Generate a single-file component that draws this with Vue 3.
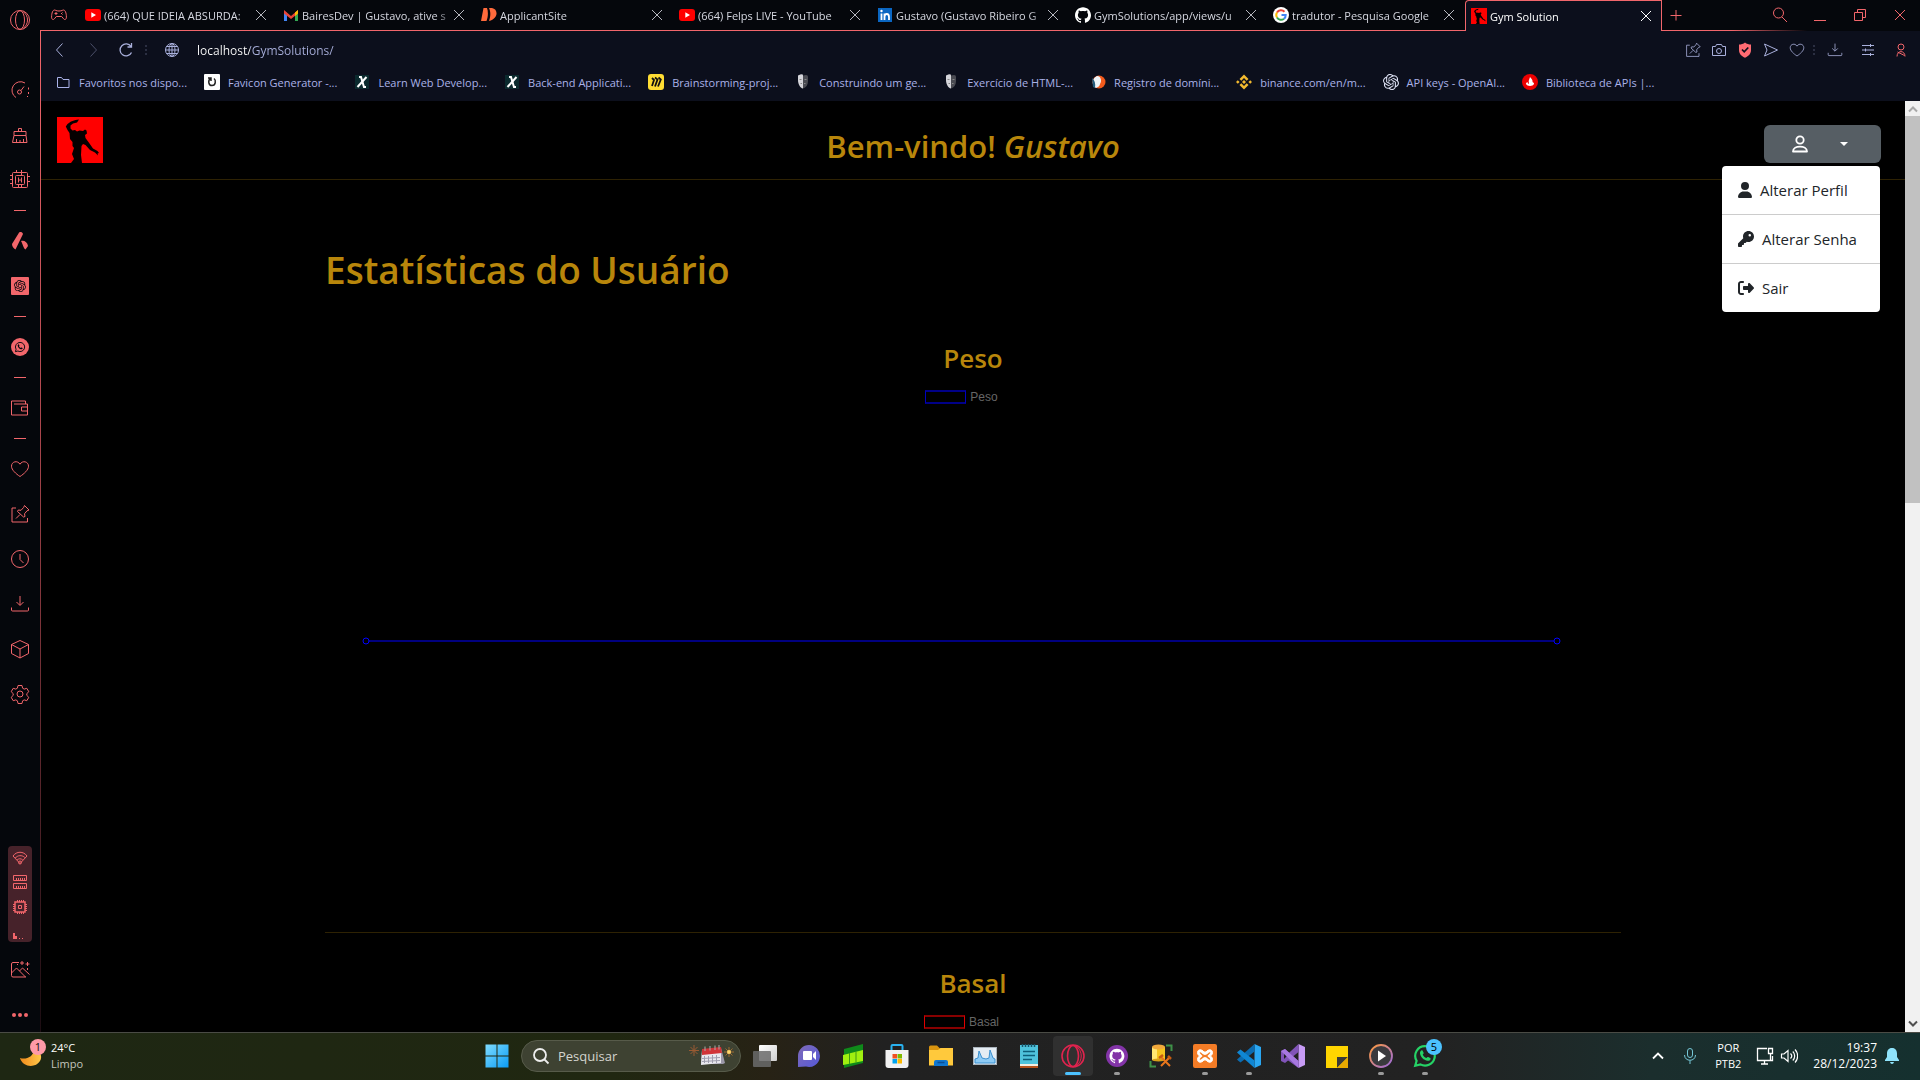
<script setup>
import { h, ref } from 'vue'

const openaiPath = 'M22.2819 9.8211a5.9847 5.9847 0 0 0-.5157-4.9108 6.0462 6.0462 0 0 0-6.5098-2.9A6.0651 6.0651 0 0 0 4.9807 4.1818a5.9847 5.9847 0 0 0-3.9977 2.9 6.0462 6.0462 0 0 0 .7427 7.0966 5.98 5.98 0 0 0 .511 4.9107 6.051 6.051 0 0 0 6.5146 2.9001A5.9847 5.9847 0 0 0 13.2599 24a6.0557 6.0557 0 0 0 5.7718-4.2058 5.9894 5.9894 0 0 0 3.9977-2.9001 6.0557 6.0557 0 0 0-.7475-7.0729zm-9.022 12.6081a4.4755 4.4755 0 0 1-2.8764-1.0408l.1419-.0804 4.7783-2.7582a.7948.7948 0 0 0 .3927-.6813v-6.7369l2.02 1.1686a.071.071 0 0 1 .038.052v5.5826a4.504 4.504 0 0 1-4.4945 4.4944zm-9.6607-4.1254a4.4708 4.4708 0 0 1-.5346-3.0137l.142.0852 4.783 2.7582a.7712.7712 0 0 0 .7806 0l5.8428-3.3685v2.3324a.0804.0804 0 0 1-.0332.0615L9.74 19.9502a4.4992 4.4992 0 0 1-6.1408-1.6464zM2.3408 7.8956a4.485 4.485 0 0 1 2.3655-1.9728V11.6a.7664.7664 0 0 0 .3879.6765l5.8144 3.3543-2.0201 1.1685a.0757.0757 0 0 1-.071 0l-4.8303-2.7865A4.504 4.504 0 0 1 2.3408 7.872zm16.5963 3.8558L13.1038 8.364 15.1192 7.2a.0757.0757 0 0 1 .071 0l4.8303 2.7913a4.4944 4.4944 0 0 1-.6765 8.1042v-5.6772a.79.79 0 0 0-.407-.667zm2.0107-3.0231l-.142-.0852-4.7735-2.7818a.7759.7759 0 0 0-.7854 0L9.409 9.2297V6.8974a.0662.0662 0 0 1 .0284-.0615l4.8303-2.7866a4.4992 4.4992 0 0 1 6.6802 4.66zM8.3065 12.863l-2.02-1.1638a.0804.0804 0 0 1-.038-.0567V6.0742a4.4992 4.4992 0 0 1 7.3757-3.4537l-.142.0805L8.704 5.459a.7948.7948 0 0 0-.3927.6813zm1.0976-2.3654l2.602-1.4998 2.6069 1.4998v2.9994l-2.5974 1.4997-2.6067-1.4997Z'
const githubPath = 'M12 .297c-6.63 0-12 5.373-12 12 0 5.303 3.438 9.8 8.205 11.385.6.113.82-.258.82-.577 0-.285-.01-1.04-.015-2.04-3.338.724-4.042-1.61-4.042-1.61C4.422 18.07 3.633 17.7 3.633 17.7c-1.087-.744.084-.729.084-.729 1.205.084 1.838 1.236 1.838 1.236 1.07 1.835 2.809 1.305 3.495.998.108-.776.417-1.305.76-1.605-2.665-.3-5.466-1.332-5.466-5.93 0-1.31.465-2.38 1.235-3.22-.135-.303-.54-1.523.105-3.176 0 0 1.005-.322 3.3 1.23.96-.267 1.98-.399 3-.405 1.02.006 2.04.138 3 .405 2.28-1.552 3.285-1.23 3.285-1.23.645 1.653.24 2.873.12 3.176.765.84 1.23 1.91 1.23 3.22 0 4.61-2.805 5.625-5.475 5.92.42.36.81 1.096.81 2.22 0 1.606-.015 2.896-.015 3.286 0 .315.21.69.825.57C20.565 22.092 24 17.592 24 12.297c0-6.627-5.373-12-12-12'
const phonePath = 'M8.3 6.6c.4-.4 1-.4 1.3.1l1 2c.2.4.1.7-.2 1l-.7.8c.8 1.7 2 2.9 3.7 3.6l.9-.9c.3-.3.6-.3.9-.2l2 1c.5.3.5.7.3 1.2-.5 1.2-1.7 1.8-2.9 1.6-4-.6-7-3.600-7.600-7.500-.1-1.100.4-2.100 1.300-2.700z'
const bubblePath = 'M12 2.200a9.700 9.700 0 0 0-8.400 14.600L2.200 21.800l5.200-1.400A9.700 9.700 0 1 0 12 2.200z'
const xmark = '<path d="M1 1l10 10M11 1L1 11"/>'

// name: [viewBox, markup]; strokes follow the text colour unless a shape sets its own
const icons = {
  close: ['0 0 12 12', xmark],
  plus: ['0 0 12 12', '<path d="M6 1v10.500M.5 6.500h11"/>'],
  search: ['0 0 16 16', '<circle cx="6.500" cy="6" r="5"/><path d="M10 10l5 5"/>'],
  minimise: ['0 0 12 12', '<path d="M0 11.500h12"/>'],
  restore: ['0 0 12 12', '<path d="M.5 3.500h8v8h-8zM3.500 3.500v-3h8v8h-3"/>'],
  pad: ['0 0 16 12', '<path d="M3.500 1C1.800 1 .6 4 .6 8c0 2.500 1.600 3.300 2.800 1.800L5.300 7.500h5.400l1.900 2.300c1.200 1.500 2.800.7 2.800-1.800 0-4-1.200-7-2.900-7-1 0-1.500 1-4.500 1S4.500 1 3.500 1z"/><path d="M5 3v3M3.500 4.500h3M10 4.500h1M11.500 3.500h.5M11.500 5.500h.5"/>'],
  opera: ['0 0 22 22', '<circle cx="11" cy="11" r="9.500"/><ellipse cx="11" cy="11" rx="4.500" ry="9.300"/><path d="M14 2.500c6 4 6 13 0 17"/>'],
  gauge: ['0 0 20 20', '<path d="M6 17.500A8.500 8.500 0 1 1 15 3M18.500 7.500v2M18.500 12v2M17.500 16v1"/><circle cx="9.500" cy="12" r="2"/><path d="M11 10.500l3-4"/>'],
  broom: ['0 0 20 20', '<path d="M8.500 6.500V3.500h3v3M4 6.500h12v4H4zM4 10.500l-1.500 7h14.500l-1-7M6.500 17v-3M10 17v-2M13.500 17v-3"/>'],
  chipbig: ['0 0 20 20', '<rect x="2.500" y="2.500" width="15" height="15" rx="1"/><rect x="5.500" y="5.500" width="9" height="9" rx="1"/><path d="M8.500 7.500v5M11.500 7.500v5M8.500 10h3M6.500 0v2M11.500 0v5M0 5.500h2M0 9.500h2M0 13.500h2M18 6.500h2M18 11.500h2M8.500 15v3M11.500 15v3"/>'],
  arc: ['0 0 20 20', '<g fill="currentColor" stroke="none"><path d="M8.500 2.500C9.500.5 12 .5 13 3L5.500 18.500C3.500 17.500 2 15.500 2 13z"/><path d="M11 10c3-1 6.500 1 7 5l-2.500 3.500c-2-1-2.500-5-4.500-8.500z"/></g>'],
  gptbox: ['0 0 18 18', `<g stroke="none"><rect width="18" height="18" rx="1" fill="currentColor"/><path transform="translate(3 3) scale(.5)" fill="#05070c" d="${openaiPath}"/></g>`],
  wabox: ['0 0 24 24', `<circle cx="12" cy="12" r="12" fill="currentColor" stroke="none"/><g transform="translate(4.500 4.500) scale(.63)" stroke="#05070c" stroke-width="2"><path d="${bubblePath}"/><path d="${phonePath}" fill="#05070c" stroke="none"/></g>`],
  wallet: ['0 0 20 20', '<path d="M15.500 6V3H1.500v14h16V6H4M17.500 9h-6v4h6"/>'],
  heart: ['0 0 20 20', '<path d="M10 17.500C6 14.800 1.500 11 1.500 7.200 1.500 2.500 7.500 1 10 5.200 12.500 1 18.500 2.500 18.500 7.200 18.500 11 14 14.800 10 17.500z"/>'],
  pin: ['0 0 20 20', '<path d="M6 4H2v14h15.500v-4M14.500 1.500l4.500 4.500-2 .8-2.500 3 .5 2.700-1.500.5-6-5.500.8-1.500 2.700.3 2.600-2.800zM10 10.500L6 14.500"/>'],
  clock: ['0 0 20 20', '<circle cx="10" cy="10" r="8.500"/><path d="M10 5v5.500l3.500 3.500"/>'],
  download: ['0 0 20 20', '<path d="M10 2v9M6.500 8l3.500 3.500L13.500 8M1.500 13.500v2.500q0 1 1 1h15q1 0 1-1v-2.500"/>'],
  cube: ['0 0 20 20', '<path d="M10 1.500l8.500 4v9L10 19l-8.500-4.500v-9zM1.500 5.500L10 10l8.500-4.500M10 10v9"/>'],
  gear: ['0 0 20 20', '<circle cx="10" cy="10" r="3"/><path d="M8 1.500h4l.6 2.700 1.600.9 2.600-.8 2 3.400-2 1.900v1.800l2 1.900-2 3.400-2.600-.8-1.600.9-.6 2.700H8l-.6-2.700-1.600-.9-2.600.8-2-3.400 2-1.900V9.600l-2-1.900 2-3.400 2.600.8 1.600-.9z"/>'],
  wifi: ['0 0 16 14', '<path d="M1 5C4.500 0 11.500 0 15 5L8 12.500zM3.300 7C5.500 4.200 10 3.800 12.800 6.500M5 9.200c1.500-1.800 4-1.900 5.700-.3"/><circle cx="8" cy="11.500" r="1.500"/>'],
  ram: ['0 0 16 16', '<path d="M1.500 1.500h13v5h-13zM1.500 9.500h13v5h-13zM4.500 4v2M6.500 4v2M8.500 4v2M10.500 4v2M12.500 4v2M4.500 12v2M6.500 12v2M8.500 12v2M10.500 12v2M12.500 12v2"/>'],
  cpu: ['0 0 16 16', '<path d="M3 3h10v10H3z" stroke-width="1.500"/><path d="M6.500 6.500h3v3h-3zM5.500 1v2M7.500 1v2M9.500 1v2M11.500 1v2M5.500 13v2M7.500 13v2M9.500 13v2M11.500 13v2M1 5.500h2M1 7.500h2M1 9.500h2M1 11.500h2M13 5.500h2M13 7.500h2M13 9.500h2M13 11.500h2"/>'],
  usage: ['0 0 16 8', '<path d="M1 7V1h2v3h2v3zM7 6h1v1H7zM10 6h1v1h-1z" fill="currentColor" stroke="none"/>'],
  image: ['0 0 20 20', '<path d="M9 2.500H3q-1.500 0-1.500 1.500v11.500q0 1.500 1.500 1.500h13M1.500 13l5-5 9 9M9.500 11l3-3 7 6.500M17.500 8v2M12 1v4M10 3h4M17.500 2v4M15.500 4h4M7 4.500h1"/>'],
  dots: ['0 0 20 6', '<g fill="currentColor" stroke="none"><circle cx="4" cy="3" r="2"/><circle cx="10" cy="3" r="2"/><circle cx="16" cy="3" r="2"/></g>'],
  back: ['0 0 16 16', '<path d="M10.500 1.500L4.500 8l6 6.500"/>'],
  forward: ['0 0 16 16', '<path d="M5.500 1.500l6 6.500-6 6.500"/>'],
  reload: ['0 0 16 16', '<path d="M13.500 10.500A6 6 0 1 1 13 4.500M13.500 1v4h-4" stroke-width="1.300"/>'],
  sep: ['0 0 4 16', '<path d="M2 3v2M2 7v2M2 11v2"/>'],
  globe: ['0 0 16 16', '<circle cx="8" cy="8" r="6.500"/><ellipse cx="8" cy="8" rx="3" ry="6.500"/><path d="M1.500 8h13M2.500 4.500h11M2.500 11.500h11M8 1.500v13"/>'],
  camera: ['0 0 16 16', '<path d="M1.500 4.500h3l1-2h5l1 2h3v9h-13z"/><circle cx="8" cy="9" r="2.500"/>'],
  shield: ['0 0 16 16', '<path d="M8 .5C9.500 2 12 2.500 14 2.500V8c0 4-3 6.500-6 7.700C5 14.500 2 12 2 8V2.500C4 2.500 6.500 2 8 .5z" fill="#ff6b72" stroke="none"/><path d="M5 7.500l2.200 2.300L11.300 5.500" stroke="#0c0f1c" stroke-width="1.700"/>'],
  send: ['0 0 16 16', '<path d="M1.500 2l13 6-13 6 2.500-6z"/>'],
  sliders: ['0 0 16 16', '<path d="M2 3.500h12M2 8h12M2 12.500h12M10.500 2v3M5.500 6.500v3M10.500 11v3"/>'],
  person: ['0 0 16 16', '<circle cx="8" cy="5" r="3"/><path d="M4 14.500c0-6.500 8-6.500 8 0M4.500 10l7 3.500"/>'],
  youtube: ['0 0 16 16', '<g stroke="none"><rect y="2" width="16" height="12" rx="3" fill="#f00"/><path d="M6.300 5.200v5.600L11 8z" fill="#fff"/></g>'],
  gmail: ['0 0 16 16', '<g stroke="none"><path d="M1 4v10h3V6z" fill="#4285f4"/><path d="M12 6v8h3V4z" fill="#34a853"/><path d="M1 3l7 6 7-6v3.500L8 12 1 6.500z" fill="#ea4335"/><path d="M12 5.500l3-2.500v3.500L12 9z" fill="#fbbc04"/></g>'],
  applicant: ['0 0 16 16', '<path d="M2.500 1H6c1.500 4 1 9-.5 13H0zM8 1h3c6.500 1 6.500 11-3 13 1.500-4 2-9 0-13z" fill="#ff6a3c" stroke="none"/>'],
  linkedin: ['0 0 16 16', '<rect x="1" y="1" width="14" height="14" fill="#0a66c2" stroke="none"/><path d="M4.500 6.500V13M7.500 13V6.500M7.500 10c0-4 4.500-4 4.500 0v3" stroke="#fff" stroke-width="1.800"/><circle cx="4.500" cy="4" r="1.200" fill="#fff" stroke="none"/>'],
  github: ['0 0 24 24', `<path d="${githubPath}" fill="#fff" stroke="none"/>`],
  google: ['0 0 16 16', '<circle cx="8" cy="8" r="8" fill="#fff" stroke="none"/><g stroke-width="2"><path d="M11.500 4.700A4.700 4.700 0 0 0 4 5.500" stroke="#ea4335"/><path d="M4 5.500a4.700 4.700 0 0 0 0 5" stroke="#fbbc05"/><path d="M4 10.500a4.700 4.700 0 0 0 7 1.200" stroke="#34a853"/><path d="M11 11.700A4.500 4.500 0 0 0 12.700 8H8.500" stroke="#4285f4"/></g>'],
  gym: ['0 0 46 46', '<g stroke="none"><rect width="46" height="46" fill="#f00"/><path d="M22 2.500L18.500 3 14 4.500 10.500 7 8.800 9.500 10.500 13 12.500 16 13 22 15.500 25 15.500 29 17 31 15 37 17 42 14 46H25L24 38 24.500 29 26 27 28.500 28 33 33 38 35.500 41 38.500 40.500 36.500 42 36 40.500 34 36 31.500 32.500 26.500 28.500 21 28 18 30 16.500 29.500 13.500 28 12.500 26 14 22.500 13.500 20 14.500 18 13 15.500 13.500 13.500 11.500 13.500 8.500 16 6.500 20 5.500z" fill="#050000"/></g>'],
  folder: ['0 0 16 16', '<path d="M2.500 3.500h4l1.500 2h6v8h-11q-.5 0-.5-.5z"/>'],
  favicon: ['0 0 16 16', '<rect width="16" height="16" rx="1" fill="#fff" stroke="none"/><path d="M4 4h3v3M6.500 4.500C4 6 4 11.500 8 11.500S12 6 10 4.500" stroke="#222" stroke-width="1.500"/>'],
  xbox: ['0 0 16 16', '<rect x="1" y="1" width="14" height="14" fill="#0b2a2e" stroke="none"/><path d="M5 3h2l3 10h2" stroke="#fff" stroke-width="2"/><path d="M12.500 3L3.500 13" stroke="#fff" stroke-width="2"/>'],
  miro: ['0 0 16 16', '<rect width="16" height="16" rx="3" fill="#ffdd33" stroke="none"/><path d="M4 4l2 2-2 6M7 3.500l2.500 2L7 12.500M10.500 3.500l2.300 2-2.800 7" stroke="#111" stroke-width="1.800"/>'],
  mask: ['0 0 16 16', '<path d="M3 1.500q5-2.500 5 0v13C5 14 3 10 3 6z" fill="#d5d5da" stroke="none"/><path d="M8 1.500q5-1.500 5 1V7c0 4-2 6.500-5 7.500z" fill="#4a4b52" stroke="none"/><path d="M4.500 5.500h2M5.500 9.500h1.500" stroke="#888"/><path d="M9.500 5.500h2M9 9.500h1.500" stroke="#888"/>'],
  registro: ['0 0 16 16', '<g stroke="none"><circle cx="9" cy="8" r="6.500" fill="#f25a1c"/><path d="M7 2c4 0 5 5 3 8 0 2-2 3-4 4-4-2-5-9 1-12z" fill="#eef4f7"/><path d="M2 4q4 3 3 10l-2-1z" fill="#245c7c"/></g>'],
  binance: ['0 0 16 16', '<g stroke="none" fill="#f3ba2f"><path d="M8 .5l4.500 4.500-1.800 1.800L8 4.100 5.300 6.800 3.500 5zM8 15.500L3.500 11l1.800-1.800L8 11.900l2.700-2.700L12.500 11zM0 8l1.800-1.800L3.600 8 1.800 9.800zM12.400 8l1.800-1.800L16 8l-1.800 1.800zM8 6l2 2-2 2-2-2z"/></g>'],
  openai: ['0 0 24 24', `<path d="${openaiPath}" fill="#dfe3f5" stroke="none"/>`],
  santander: ['0 0 16 16', '<g stroke="none"><circle cx="8" cy="8" r="8" fill="#ec0000"/><path d="M8 3q3 3 2.500 5 2 1 1.500 2c-1 2.500-7 2.500-8 0 0-1 .5-1.500 1.500-2q0 1.500 1.500 2Q6 7 8 3z" fill="#fff"/></g>'],
  userline: ['0 0 18 18', '<circle cx="9" cy="5" r="3.700" stroke-width="1.800"/><path d="M2 16.500c0-6.500 14-6.500 14 0z" stroke-width="1.800" stroke-linejoin="round"/>'],
  user: ['0 0 448 512', '<path fill="currentColor" stroke="none" d="M224 256A128 128 0 1 0 224 0a128 128 0 1 0 0 256zm-45.700 48C79.800 304 0 383.800 0 482.300C0 498.700 13.300 512 29.700 512l388.600 0c16.400 0 29.700-13.300 29.700-29.700C448 383.800 368.200 304 269.700 304l-91.400 0z"/>'],
  key: ['0 0 512 512', '<path fill="currentColor" stroke="none" d="M336 352c97.200 0 176-78.800 176-176S433.200 0 336 0S160 78.800 160 176c0 18.700 2.900 36.800 8.300 53.700L7 391c-4.500 4.500-7 10.600-7 17l0 80c0 13.300 10.700 24 24 24l80 0c13.300 0 24-10.700 24-24l0-40 40 0c13.300 0 24-10.700 24-24l0-40 40 0c6.400 0 12.500-2.500 17-7l33.300-33.300c16.900 5.400 35 8.300 53.700 8.300zM376 96a40 40 0 1 1 0 80 40 40 0 1 1 0-80z"/>'],
  exit: ['0 0 512 512', '<path fill="currentColor" stroke="none" d="M377.900 105.900L500.700 228.700c7.200 7.200 11.300 17.100 11.300 27.300s-4.100 20.100-11.300 27.300L377.900 406.100c-6.400 6.400-15 9.900-24 9.900c-18.700 0-33.900-15.200-33.900-33.900l0-62.100-128 0c-17.700 0-32-14.300-32-32l0-64c0-17.700 14.300-32 32-32l128 0 0-62.100c0-18.700 15.200-33.900 33.900-33.900c9 0 17.600 3.600 24 9.900zM160 96L96 96c-17.700 0-32 14.300-32 32l0 256c0 17.700 14.300 32 32 32l64 0c17.700 0 32 14.300 32 32s-14.300 32-32 32l-64 0c-53 0-96-43-96-96L0 128C0 75 43 32 96 32l64 0c17.700 0 32 14.300 32 32s-14.300 32-32 32z"/>'],
  caret: ['0 0 8 4', '<path d="M0 0h8L4 4z" fill="currentColor" stroke="none"/>'],
  moon: ['0 0 24 24', '<defs><linearGradient id="moon" x2="1"><stop stop-color="#f08a1c"/><stop offset="1" stop-color="#ffc84a"/></linearGradient></defs><path d="M1 14c6 2 13-1 14-8 6 1 9 6 6 11-4 7-17 7-20-3z" fill="url(#moon)" stroke="none"/>'],
  start: ['0 0 24 24', '<defs><linearGradient id="win" x2="1" y2="1"><stop stop-color="#7fdcff"/><stop offset="1" stop-color="#0a9bf5"/></linearGradient></defs><path d="M.5.500h11v11H.5zM12.500.500h11v11h-11zM.5 12.500h11v11H.5zM12.500 12.500h11v11h-11z" fill="url(#win)" stroke="none"/>'],
  lens: ['0 0 18 18', '<circle cx="8" cy="8" r="6" stroke-width="1.800"/><path d="M12.500 12.500l4 4" stroke-width="1.800"/>'],
  calendar: ['0 0 46 24', '<g stroke="none"><path d="M14 6l19-2 4 15-2 1H13z" fill="#9b98a8"/><path d="M14 6l19-2v15l-20 2z" fill="#e9e8ee"/><path d="M14 5l19-2 1 6-20 2z" fill="#d13438"/></g><path d="M16.500 12v7M20.500 12v7M24.500 11v8M28.500 11v8M14 14.500l18-1M14 17.500l18-1" stroke="#a09eae"/><path d="M17 7V2.500M22 6.500V2M27 6V1.500M31 5.500V1" stroke="#aaa"/><path d="M6 1v11M1 6.500h10M2.500 3l7 7M9.500 3l-7 7" stroke="#9a5a32"/><path d="M41 3v10M36 8h10M37.500 4.500l7 7M44.500 4.500l-7 7" stroke="#9a6a32"/><circle cx="41" cy="8" r="2" fill="#ffd76b" stroke="none"/>'],
  taskview: ['0 0 24 24', '<defs><linearGradient id="tv" y2="1"><stop stop-color="#fff"/><stop offset="1" stop-color="#cfcfcf"/></linearGradient></defs><g stroke="none"><rect x="6" y="1" width="18" height="16" rx="1" fill="url(#tv)"/><rect y="7" width="18" height="16" rx="1" fill="#6b6b6b" opacity=".85"/></g>'],
  chat: ['0 0 24 24', '<defs><linearGradient id="ch" x2="1" y2="1"><stop stop-color="#7f6bb8"/><stop offset="1" stop-color="#5558d8"/></linearGradient></defs><g stroke="none"><path d="M12 1a11 11 0 1 1-3 21.600L1 23v-11A11 11 0 0 1 12 1z" fill="url(#ch)"/><rect x="6" y="7" width="9" height="9" rx="1" fill="#fff"/><path d="M16 10l3-3v9l-3-3z" fill="#fff"/></g>'],
  green: ['0 0 24 24', '<g stroke="none"><path d="M3 5L22 0v19L3 24z" fill="#0f8a1a"/><path d="M2 11l20-5v11L2 21z" fill="#a0f010"/></g><path d="M8.500 9v11M15 7.500v11" stroke="#3d9a12"/>'],
  store: ['0 0 24 24', '<path d="M6.500 8V2q0-1 1-1h9q1 0 1 1v6" stroke="#29b2f0" stroke-width="2"/><g stroke="none"><path d="M.5 6h23v15q0 3-3 3h-17q-3 0-3-3z" fill="#f2f2f2"/><path d="M7.500 10H12v4.500H7.500z" fill="#f25022"/><path d="M12.500 10H17v4.500h-4.500z" fill="#7fba00"/><path d="M7.500 15H12v4.500H7.500z" fill="#00a4ef"/><path d="M12.500 15H17v4.500h-4.500z" fill="#ffb900"/></g>'],
  explorer: ['0 0 24 24', '<g stroke="none"><path d="M0 3q0-1.500 1.500-1.500H8l3 3h11V10H0z" fill="#d9940f"/><path d="M0 6h9l2.500-2H24v17.500H0z" fill="#ffc93c"/><path d="M5 22v-4q0-2 2-2h10q2 0 2 2v4z" fill="#1177cf"/><path d="M8.500 18.500h7" stroke="#0a4f96" stroke-width="1.500"/></g>'],
  monitor: ['0 0 24 24', '<rect x=".5" y="3.500" width="23" height="17" fill="#e4ecf3" stroke="#aab4bd"/><path d="M2 19v-4l3-1 1-7 3 7 4 1 3-1 1-8 3 8 2 1v4z" fill="#8ecbf5" stroke="#3b90d0"/>'],
  notepad: ['0 0 24 24', '<g stroke="none"><rect x="3" y="1" width="18" height="20" fill="#4fc3dc"/><rect x="3" y="20" width="18" height="2" fill="#f3ede0"/><rect x="3" y="22" width="18" height="2" fill="#b5531c"/></g><path d="M6 7.500h12M6 11.500h12M6 15.500h9" stroke="#0d5f7a" stroke-width="1.600"/><path d="M5.500 0v3M8.500 0v3M11.500 0v3M14.500 0v3M17.500 0v3" stroke="#17566b" stroke-width="1.500"/>'],
  operagx: ['0 0 24 24', '<g stroke="#e0234e" stroke-width="1.600"><circle cx="12" cy="12" r="11"/><ellipse cx="12" cy="12" rx="5.500" ry="10.500"/><path d="M15 2c7 5 7 15 0 20" stroke-width="1"/></g>'],
  ghdesk: ['0 0 24 24', `<g stroke="none"><circle cx="12" cy="12" r="11" fill="#8334a8"/><path transform="translate(4.500 4.500) scale(.62)" fill="#fff" d="${githubPath}"/></g>`],
  dbtool: ['0 0 24 24', '<g stroke="none"><path d="M3 3h13v13H3z" fill="#f5c51e"/><path d="M3 3h5v13H3z" fill="#ffe873"/><ellipse cx="9.500" cy="3" rx="6.500" ry="2.500" fill="#f2a93b"/><ellipse cx="9.500" cy="16" rx="6.500" ry="1.500" fill="#d8a018"/></g><path d="M17 1.500h5.500V7M1.500 17v5.500H7" stroke="#3f9148" stroke-width="2"/><path d="M12 22l9-9M12 13l9 9" stroke="#e8761c" stroke-width="2"/><path d="M10 14l4-3M19 12l3 3" stroke="#c65c12" stroke-width="2.500"/>'],
  xampp: ['0 0 24 24', '<rect width="24" height="24" rx="2" fill="#f47c26" stroke="none"/><path d="M4.500 8.500C4.500 5 9 5 11 8h2c2-3 6.500-3 6.500.5 0 2.500-2 3.500-2 3.500s2 1 2 3.500c0 3.500-4.500 3.500-6.500.5h-2c-2 3-6.500 3-6.500-.5C4.500 13 6.500 12 6.500 12s-2-1-2-3.500z" fill="#fff" stroke="#fff"/><path d="M7 8.300c1.500-.5 2.500 2.700 5 2.700s3.500-3.200 5-2.700-2.500 3.200-2.500 3.700 4 3 2.500 3.700-2.500-2.700-5-2.700-3.500 3.200-5 2.700 2.500-3.200 2.500-3.700S5.500 8.800 7 8.300z" fill="#f47c26" stroke="none"/>'],
  vscode: ['0 0 24 24', '<g stroke="none"><path d="M17.500 0L24 3v18l-6.500 3z" fill="#2aa7f2"/><path d="M17.500 0v7.500L3.500 18.500 1 16.500 0 15.500z" fill="#0b6bb0"/><path d="M17.500 24v-7.500L3.500 5.500 1 7.500 0 8.500z" fill="#0f86d3"/></g>'],
  vs: ['0 0 24 24', '<g stroke="none"><path d="M17.500 0L24 3v18l-6.500 3z" fill="#c79bf5"/><path d="M17.500 0v8L4 19l-4-2V7l4-2 13.500 12v7L3 13.500z" fill="#8154b8"/><path d="M3 9l3 3-3 3z" fill="#202020"/><path d="M17.500 24L0 7l4-2 13.500 12z" fill="#a778e0"/></g>'],
  sticky: ['0 0 24 24', '<g stroke="none"><path d="M1 2h22v22H1z" fill="#ffd500"/><path d="M12 24V13h11z" fill="#3b3a36"/><path d="M12 24l11-11v11z" fill="#e8a900"/></g>'],
  media: ['0 0 24 24', '<defs><linearGradient id="md" x2="1" y2="1"><stop stop-color="#ff9a3c"/><stop offset="1" stop-color="#9a6ae0"/></linearGradient></defs><circle cx="12" cy="12" r="11" fill="#3a3a3e" stroke="url(#md)" stroke-width="1.800"/><path d="M9 6.500v11l8-5.500z" fill="#fff" stroke="none"/>'],
  whatsapp: ['0 0 24 24', `<path d="${bubblePath}" stroke="#25d366" stroke-width="2.200"/><path d="${phonePath}" fill="#25d366" stroke="none"/>`],
  up: ['0 0 12 12', '<path d="M1 8.500l5-5 5 5" stroke-width="1.800"/>'],
  mic: ['0 0 14 18', '<rect x="4.500" y="1.500" width="5" height="9" rx="2.500"/><path d="M1.500 8c0 7 11 7 11 0M7 13.500V17"/>'],
  network: ['0 0 18 18', '<path d="M11 1.500H1.500v12h15V9M5 17h7M8.500 14v3M12.500 1.500h4v5h-4zM14.500 6.500V14" stroke-width="1.300"/>'],
  sound: ['0 0 18 18', '<path d="M1.500 7v4H4l4 3.500v-11L4 7zM10.500 6.500c1.500 1.500 1.500 3.500 0 5M12.800 4.500c2.500 2.500 2.500 6.500 0 9M15 2.500c3.500 3.500 3.500 9.500 0 13" stroke-width="1.200"/>'],
  bell: ['0 0 16 16', '<path d="M8 0c3.500 0 5 2.500 5 5.500V9l2 3v1H1v-1l2-3V5.500C3 2.500 4.500 0 8 0zM6 14h4q-.5 2-2 2t-2-2z" fill="#8fe3fb" stroke="none"/>'],
  arrowup: ['0 0 10 8', '<path d="M1 6.500l4-4 4 4" stroke="#a8a8a8" stroke-width="2"/>'],
  arrowdown: ['0 0 10 8', '<path d="M1 1.500l4 4 4-4" stroke="#505050" stroke-width="2"/>'],
}

const Icon = (props) => {
  const [viewBox, markup] = icons[props.name]
  const [, , w, hgt] = viewBox.split(' ').map(Number)
  const height = props.size
  return h('svg', {
    viewBox,
    height,
    width: Math.round((height * w) / hgt),
    fill: 'none',
    stroke: 'currentColor',
    'aria-hidden': 'true',
    innerHTML: markup,
  })
}
Icon.props = ['name', 'size']

const tabs = [
  { icon: 'youtube', title: '(664) QUE IDEIA ABSURDA:' },
  { icon: 'gmail', title: 'BairesDev | Gustavo, ative s' },
  { icon: 'applicant', title: 'ApplicantSite' },
  { icon: 'youtube', title: '(664) Felps LIVE - YouTube' },
  { icon: 'linkedin', title: 'Gustavo (Gustavo Ribeiro G' },
  { icon: 'github', title: 'GymSolutions/app/views/u' },
  { icon: 'google', title: 'tradutor - Pesquisa Google' },
  { icon: 'gym', title: 'Gym Solution', active: true },
]

const bookmarks = [
  { icon: 'folder', title: 'Favoritos nos dispo...' },
  { icon: 'favicon', title: 'Favicon Generator -...' },
  { icon: 'xbox', title: 'Learn Web Develop...' },
  { icon: 'xbox', title: 'Back-end Applicati...' },
  { icon: 'miro', title: 'Brainstorming-proj...' },
  { icon: 'mask', title: 'Construindo um ge...' },
  { icon: 'mask', title: 'Exercício de HTML-...' },
  { icon: 'registro', title: 'Registro de domíni...' },
  { icon: 'binance', title: 'binance.com/en/m...' },
  { icon: 'openai', title: 'API keys - OpenAI...' },
  { icon: 'santander', title: 'Biblioteca de APIs |...' },
]

const sideGroups = [
  ['gauge', 'broom', 'chipbig'],
  ['arc', 'gptbox'],
  ['wabox'],
  ['wallet'],
  ['heart', 'pin', 'clock', 'download', 'cube', 'gear'],
]

const menu = [
  { icon: 'user', label: 'Alterar Perfil' },
  { icon: 'key', label: 'Alterar Senha' },
  { icon: 'exit', label: 'Sair' },
]

const charts = [
  { title: 'Peso', tone: 'blue' },
  { title: 'Basal', tone: 'red' },
]

const apps = [
  { icon: 'taskview' },
  { icon: 'chat' },
  { icon: 'green' },
  { icon: 'store' },
  { icon: 'explorer' },
  { icon: 'monitor' },
  { icon: 'notepad' },
  { icon: 'operagx', state: 'active' },
  { icon: 'ghdesk', state: 'open' },
  { icon: 'dbtool' },
  { icon: 'xampp', state: 'open' },
  { icon: 'vscode', state: 'open' },
  { icon: 'vs' },
  { icon: 'sticky' },
  { icon: 'media', state: 'open' },
  { icon: 'whatsapp', state: 'open', badge: '5' },
]

const address = ref('localhost/GymSolutions/')
const query = ref('')
</script>

<template>
  <div class="desktop">
    <div class="browser">
      <aside class="sidebar">
        <button class="side-logo" aria-label="Opera"><Icon name="opera" :size="22" /></button>
        <template v-for="(group, g) in sideGroups" :key="g">
          <div v-if="g" class="side-dash"></div>
          <button v-for="name in group" :key="name" class="side-item" :aria-label="name">
            <Icon :name="name" :size="['gptbox', 'wabox'].includes(name) ? 18 : 20" />
          </button>
        </template>
        <div class="side-end">
          <div class="meters">
            <Icon name="wifi" :size="14" />
            <Icon name="ram" :size="16" />
            <Icon name="cpu" :size="16" />
            <Icon name="usage" :size="8" class="usage" />
          </div>
          <button class="side-item" aria-label="image"><Icon name="image" :size="20" /></button>
          <button class="side-item" aria-label="more"><Icon name="dots" :size="6" /></button>
        </div>
      </aside>

      <div class="main">
        <div class="tabstrip">
          <button class="pad" aria-label="GX"><Icon name="pad" :size="12" /></button>
          <div v-for="tab in tabs" :key="tab.title" class="tab" :class="{ active: tab.active }">
            <button class="tab-label">
              <Icon :name="tab.icon" :size="16" />
              <span class="tab-title">{{ tab.title }}</span>
            </button>
            <button class="tab-close" aria-label="close"><Icon name="close" :size="12" /></button>
          </div>
          <button class="new-tab" aria-label="new tab"><Icon name="plus" :size="12" /></button>
          <div class="window-buttons">
            <button aria-label="search"><Icon name="search" :size="16" /></button>
            <button aria-label="minimise"><Icon name="minimise" :size="12" /></button>
            <button aria-label="restore"><Icon name="restore" :size="12" /></button>
            <button aria-label="close"><Icon name="close" :size="12" /></button>
          </div>
        </div>

        <div class="frame">
          <div class="toolbar">
            <div class="nav">
              <button aria-label="back"><Icon name="back" :size="16" /></button>
              <button aria-label="forward" class="dim"><Icon name="forward" :size="16" /></button>
              <button aria-label="reload"><Icon name="reload" :size="16" /></button>
            </div>
            <Icon name="sep" :size="16" class="sep" />
            <Icon name="globe" :size="16" class="globe" />
            <input v-model="address" class="address" aria-label="address" />
            <div class="tools">
              <button aria-label="pinboard"><Icon name="pin" :size="16" /></button>
              <button aria-label="snapshot"><Icon name="camera" :size="16" /></button>
              <button aria-label="shield"><Icon name="shield" :size="16" /></button>
              <button aria-label="flow"><Icon name="send" :size="16" /></button>
              <button aria-label="favourite"><Icon name="heart" :size="16" /></button>
            </div>
            <Icon name="sep" :size="16" class="sep" />
            <div class="tools wide">
              <button aria-label="downloads"><Icon name="download" :size="16" /></button>
              <button aria-label="setup"><Icon name="sliders" :size="16" /></button>
              <button aria-label="profile" class="accent"><Icon name="person" :size="16" /></button>
            </div>
          </div>

          <nav class="bookmarks">
            <a v-for="mark in bookmarks" :key="mark.title" href="#" class="bookmark">
              <Icon :name="mark.icon" :size="16" /><span>{{ mark.title }}</span>
            </a>
          </nav>

          <div class="viewport">
            <div class="page">
              <header class="page-head">
                <a href="#" class="brand" aria-label="Gym Solution"><Icon name="gym" :size="46" /></a>
                <h2>Bem-vindo! <em>Gustavo</em></h2>
                <div class="account">
                  <button class="account-button" aria-label="account">
                    <Icon name="userline" :size="18" /><Icon name="caret" :size="4" />
                  </button>
                  <ul class="menu">
                    <li v-for="item in menu" :key="item.label">
                      <a href="#"><Icon :name="item.icon" :size="16" />{{ item.label }}</a>
                    </li>
                  </ul>
                </div>
              </header>

              <main class="content">
                <h1>Estatísticas do Usuário</h1>
                <section v-for="chart in charts" :key="chart.title" class="chart" :class="chart.tone">
                  <h3>{{ chart.title }}</h3>
                  <div class="plot">
                    <div class="legend"><i></i>{{ chart.title }}</div>
                    <svg class="series">
                      <line x1="0" y1="50%" x2="100%" y2="50%" />
                      <circle cx="0" cy="50%" r="3" />
                      <circle cx="100%" cy="50%" r="3" />
                    </svg>
                  </div>
                </section>
              </main>
            </div>
            <div class="scrollbar">
              <Icon name="arrowup" :size="8" />
              <div class="thumb"></div>
              <Icon name="arrowdown" :size="8" />
            </div>
          </div>
        </div>
      </div>
    </div>

    <footer class="taskbar">
      <button class="weather">
        <span class="moon"><Icon name="moon" :size="24" /><b>1</b></span>
        <span class="lines"><span>24°C</span><span class="soft">Limpo</span></span>
      </button>
      <div class="dock">
        <button class="start" aria-label="start"><Icon name="start" :size="24" /></button>
        <label class="finder">
          <Icon name="lens" :size="18" />
          <input v-model="query" placeholder="Pesquisar" aria-label="Pesquisar" />
          <Icon name="calendar" :size="24" />
        </label>
        <button v-for="app in apps" :key="app.icon" class="app" :class="app.state" :aria-label="app.icon">
          <Icon :name="app.icon" :size="24" />
          <b v-if="app.badge">{{ app.badge }}</b>
        </button>
      </div>
      <div class="tray">
        <Icon name="up" :size="12" />
        <Icon name="mic" :size="18" class="mic" />
        <span class="lines keyboard"><span>POR</span><span>PTB2</span></span>
        <span class="status"><Icon name="network" :size="18" /><Icon name="sound" :size="18" /></span>
        <span class="lines clock"><span>19:37</span><span>28/12/2023</span></span>
        <Icon name="bell" :size="16" />
      </div>
    </footer>
  </div>
</template>

<style>
body {
  margin: 0;
  background: #000;
}
</style>

<style scoped>
.desktop {
  --accent: #f2666b;
  display: flex;
  flex-direction: column;
  height: 100vh;
  overflow: hidden;
  font-family: "Open Sans", "Noto Sans", sans-serif;
  font-size: 11px;
  color: #d5d7e0;
}
button {
  display: flex;
  align-items: center;
  justify-content: center;
  padding: 0;
  border: 0;
  background: none;
  color: inherit;
  font: inherit;
}
a {
  color: inherit;
  text-decoration: none;
}
svg {
  display: block;
  flex: none;
}
.browser {
  display: flex;
  flex: 1;
  min-height: 0;
}

.sidebar {
  display: flex;
  flex-direction: column;
  width: 40px;
  background: #05070c;
  color: var(--accent);
}
.side-logo {
  height: 40px;
  margin-bottom: 27px;
}
.side-item {
  height: 45px;
}
.side-dash {
  width: 12px;
  height: 1px;
  margin: 8px auto 7px;
  background: var(--accent);
}
.side-end {
  display: flex;
  flex-direction: column;
  margin-top: auto;
  margin-bottom: -5px;
}
.meters {
  display: flex;
  flex-direction: column;
  align-items: center;
  gap: 9px;
  height: 91px;
  margin: 0 8px 5px;
  padding-top: 5px;
  border-radius: 4px;
  background: #46222a;
}
.usage {
  margin-top: 8px;
}

.main {
  display: flex;
  flex: 1;
  flex-direction: column;
  min-width: 0;
}
.tabstrip {
  display: flex;
  height: 31px;
  background:
    linear-gradient(90deg, var(--accent) 90%, transparent 94%) bottom / 100% 1px no-repeat,
    #05070c;
}
.pad {
  width: 39px;
  padding-right: 2px;
  height: 30px;
  color: var(--accent);
}
.tab {
  display: flex;
  align-items: center;
  box-sizing: border-box;
  width: 198px;
  height: 30px;
  padding: 0 10px 0 6px;
  gap: 3px;
}
.tab.active {
  width: 197px;
  height: 31px;
  padding: 0 9px 0 5px;
  border: 1px solid var(--accent);
  border-bottom: 0;
  border-radius: 4px 0 0 0;
  background: #0c0f1c;
  color: #fff;
}
.tab-label {
  flex: 1;
  min-width: 0;
  height: 30px;
  justify-content: flex-start;
  gap: 3px;
}
.tab-title {
  white-space: nowrap;
  mask-image: linear-gradient(90deg, #000 134px, transparent 152px);
}
.tab-close {
  color: #b6b7bf;
}
.active .tab-close {
  color: #fff;
}
.new-tab {
  width: 28px;
  height: 30px;
  color: var(--accent);
}
.window-buttons {
  display: flex;
  height: 30px;
  margin-left: auto;
  color: var(--accent);
}
.window-buttons button {
  width: 40px;
}

.frame {
  display: flex;
  flex: 1;
  flex-direction: column;
  min-height: 0;
  padding-left: 1px;
  background: linear-gradient(#f2666b, #b54a50 35%, #1c0d12);
}
.toolbar {
  display: flex;
  align-items: center;
  height: 38px;
  padding: 0 3px 0 2px;
  background: #0c0f1c;
  color: #a9b0dc;
}
.nav {
  display: flex;
}
.nav button {
  width: 33px;
}
.dim {
  opacity: 0.4;
}
.sep {
  margin: 0 2px;
  opacity: 0.4;
}
.globe {
  margin: 0 17px 0 14px;
}
.address {
  flex: 1;
  min-width: 0;
  padding: 0;
  border: 0;
  outline: 0;
  font: inherit;
  font-size: 12px;
  color: transparent;
  background: linear-gradient(90deg, #fff 53px, #a9b0dc 53px);
  background-clip: text;
}
.tools {
  display: flex;
}
.tools button {
  width: 26px;
}
.tools.wide button {
  width: 33px;
}
.tools .accent {
  color: var(--accent);
}
.bookmarks {
  display: flex;
  align-items: center;
  gap: 17px;
  height: 26px;
  padding: 0 14px 6px;
  background: #0c0f1c;
  color: #aab2e8;
  white-space: nowrap;
}
.bookmark {
  display: flex;
  align-items: center;
  gap: 8px;
}

.viewport {
  display: flex;
  flex: 1;
  min-height: 0;
  background: #000;
}
.page {
  flex: 1;
  min-width: 0;
  overflow: hidden;
  color: #b8860b;
}
.page-head {
  display: grid;
  grid-template-columns: 1fr auto 1fr;
  align-items: center;
  padding: 16px 24px 16px 16px;
  border-bottom: 1px solid #2e2203;
}
.brand {
  justify-self: start;
}
h1,
h2,
h3 {
  margin: 0;
  font-weight: 600;
}
h2 {
  padding: 12px 0 0 8px;
  font-size: 31px;
  line-height: 34px;
}
.account {
  position: relative;
  justify-self: end;
  padding-top: 8px;
}
.account-button {
  gap: 31px;
  width: 117px;
  height: 38px;
  padding-right: 6px;
  border-radius: 6px;
  background: #565e64;
  color: #fff;
}
.menu {
  position: absolute;
  top: 49px;
  right: 1px;
  width: 158px;
  margin: 0;
  padding: 0;
  border-radius: 4px;
  background: #fff;
  color: #212529;
  font-size: 15px;
  list-style: none;
}
.menu li + li {
  border-top: 1px solid #ccc;
}
.menu a {
  display: flex;
  align-items: center;
  gap: 8px;
  height: 48px;
  padding-left: 16px;
}

.content {
  max-width: 1296px;
  margin: 0 auto;
  padding: 66px 12px 0;
}
h1 {
  font-size: 37px;
  line-height: 48px;
}
.chart {
  padding-bottom: 54px;
}
h1 + .chart {
  padding-top: 47px;
}
.chart + .chart {
  padding-top: 33px;
  border-top: 1px solid #2e2203;
}
h3 {
  font-size: 26px;
  line-height: 34px;
  text-align: center;
}
.plot {
  margin: 15px 64px 0 41px;
}
.legend {
  display: flex;
  align-items: center;
  justify-content: center;
  gap: 4px;
  color: #666;
  font: 12px/14px "Liberation Sans", Arial, sans-serif;
}
.legend i {
  box-sizing: border-box;
  width: 41px;
  height: 14px;
  border: solid;
  border-width: 2px 1px;
}
.blue i {
  border-color: #000088 #0000c0;
}
.red i {
  border-color: #880000 #e00000;
}
.series {
  width: 100%;
  height: 474px;
  overflow: visible;
  stroke: #00f;
}
.red .series {
  stroke: #f00;
}
.scrollbar {
  display: flex;
  flex-direction: column;
  align-items: center;
  width: 15px;
  padding: 4px 0;
  background: #f1f1f1;
}
.thumb {
  width: 15px;
  height: 387px;
  margin: 3px 0 auto;
  background: #c1c1c1;
}

.taskbar {
  display: flex;
  align-items: center;
  justify-content: space-between;
  position: relative;
  box-sizing: border-box;
  height: 48px;
  padding-bottom: 2px;
  border-top: 1px solid #4a4b45;
  background: linear-gradient(90deg, #1e2713, #202711 32%, #272215 40%, #212121 46%, #222 75%, #1b2e2d 86%, #15302f);
  color: #fff;
}
.lines {
  display: flex;
  flex-direction: column;
  line-height: 16px;
}
.soft {
  color: #c3c5bd;
}
.weather {
  gap: 8px;
  padding-left: 19px;
  text-align: left;
}
.moon {
  position: relative;
}
.moon b {
  position: absolute;
  top: -5px;
  right: -3px;
  width: 16px;
  border-radius: 8px;
  background: #ff9aa8;
  color: #111;
  font-weight: 400;
  line-height: 16px;
  text-align: center;
}
.dock {
  display: flex;
  align-items: center;
  position: absolute;
  left: 50%;
  transform: translateX(-50%);
}
.start {
  width: 48px;
}
.finder {
  display: flex;
  align-items: center;
  box-sizing: border-box;
  width: 220px;
  height: 32px;
  margin-right: 2px;
  padding: 0 6px 0 10px;
  gap: 8px;
  border: 1px solid #575b4a;
  border-radius: 16px;
  background: #3e4232;
  color: #eee;
}
.finder input {
  flex: 1;
  min-width: 0;
  padding: 0;
  border: 0;
  outline: 0;
  background: none;
  color: #fff;
  font: inherit;
  font-size: 13px;
}
.finder input::placeholder {
  color: #d4d5cf;
  opacity: 1;
}
.app {
  position: relative;
  width: 40px;
  height: 40px;
  margin: 0 2px;
  border-radius: 4px;
}
.app.active {
  background: #303030;
}
.app.active::after,
.app.open::after {
  content: "";
  position: absolute;
  bottom: 1px;
  width: 6px;
  height: 3px;
  border-radius: 2px;
  background: #9a9a9a;
}
.app.active::after {
  width: 16px;
  background: #4cc2ff;
}
.app b {
  position: absolute;
  top: 3px;
  right: 3px;
  width: 16px;
  border-radius: 8px;
  background: #4cc2ff;
  color: #000;
  font-weight: 400;
  line-height: 16px;
}
.tray {
  display: flex;
  align-items: center;
  padding-right: 20px;
}
.mic {
  margin: 0 18px 0 19px;
  color: #76c8d8;
}
.keyboard {
  align-items: center;
}
.status {
  display: flex;
  gap: 6px;
  margin: 0 15px;
}
.clock {
  margin-right: 7px;
  font-size: 12px;
  text-align: right;
}
</style>
